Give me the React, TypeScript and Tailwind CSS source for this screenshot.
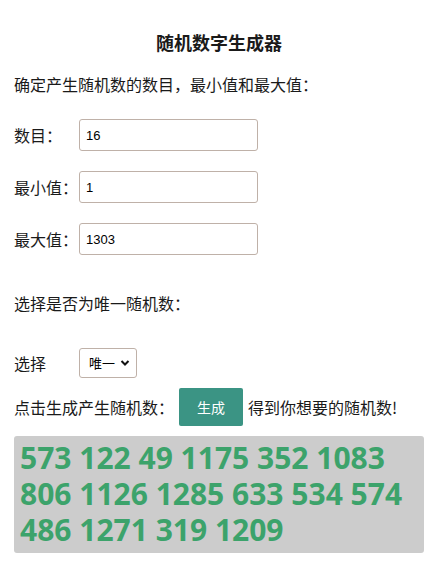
import React from "react";

const numbers = [573, 122, 49, 1175, 352, 1083, 806, 1126, 1285, 633, 534, 574, 486, 1271, 319, 1209];

const fields = [
  { label: "数目：", value: "16" },
  { label: "最小值：", value: "1" },
  { label: "最大值：", value: "1303" },
];

const App: React.FC = () => {
  return (
    <div className="min-h-[572px] bg-white pl-[14px] pr-[8px] pt-[30px] text-[16px] text-[#1a1a1a] [font-family:'Noto_Sans_CJK_SC','Noto_Sans',sans-serif]">
      <h1 className="text-center text-[18px] font-bold leading-[24px]">随机数字生成器</h1>
      <p className="mt-[19px] leading-[22px]">确定产生随机数的数目，最小值和最大值：</p>

      <div className="mt-[24px] flex flex-col gap-[20px]">
        {fields.map((f) => (
          <div key={f.label} className="flex items-center">
            <span className="w-[65px] whitespace-nowrap">{f.label}</span>
            <input
              readOnly
              value={f.value}
              className="h-[32px] w-[179px] rounded-[3px] border border-[#bfb1a8] px-[6px] text-[13px] text-black outline-none [font-family:'Liberation_Sans',Arial,sans-serif]"
            />
          </div>
        ))}
      </div>

      <p className="mt-[37px] leading-[22px]">选择是否为唯一随机数：</p>

      <div className="mt-[34px] flex items-center">
        <span className="w-[65px]">选择</span>
        <div className="relative flex h-[30px] w-[58px] items-center rounded-[3px] border border-[#bfb1a8] pl-[9px] text-[13px] text-black">
          唯一
          <svg className="absolute right-[6px] top-[10px]" width="10" height="8" viewBox="0 0 10 8">
            <path d="M1.5 2 L5 5.5 L8.5 2" fill="none" stroke="#111" strokeWidth="2" />
          </svg>
        </div>
      </div>

      <div className="mt-[10px] flex items-center">
        <span className="w-[165px]">点击生成产生随机数：</span>
        <button className="h-[38px] w-[64px] rounded-[2px] bg-[#3b9484] text-[14px] text-white">生成</button>
        <span className="ml-[5px]">得到你想要的随机数!</span>
      </div>

      <div className="mt-[10px] rounded-[3px] bg-[#cccccc] px-[6px] pb-[5px] pt-[4px] text-[30px] font-bold leading-[36px] text-[#3ca36b] [font-family:'Open_Sans',sans-serif]">
        {numbers.join(" ")}
      </div>
    </div>
  );
};

export default App;
